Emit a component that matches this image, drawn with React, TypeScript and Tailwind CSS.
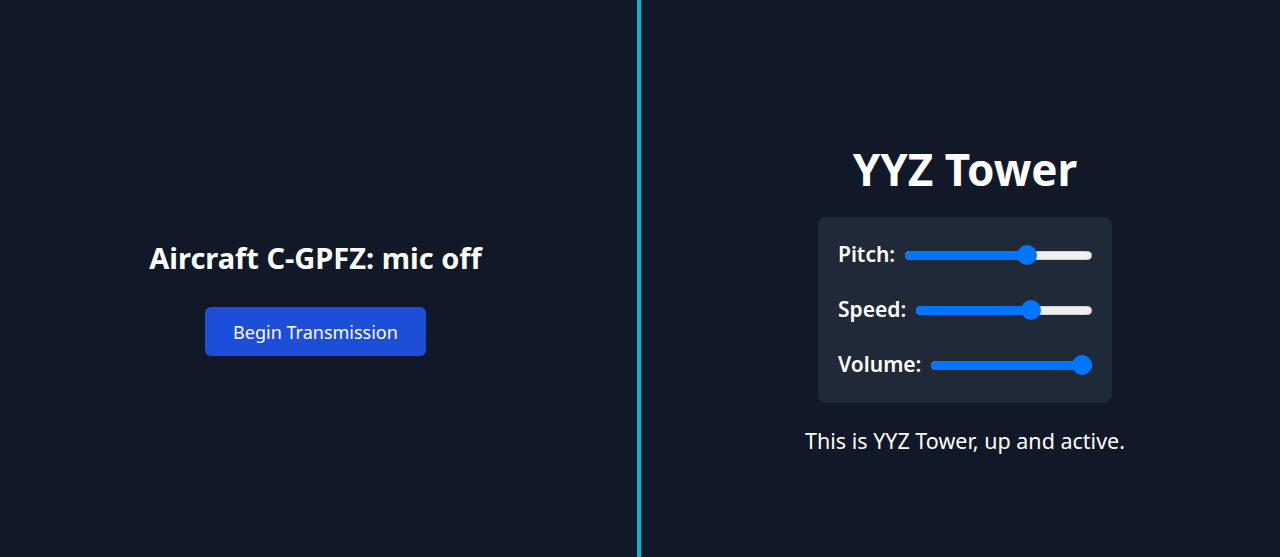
import React from 'react';

const font = { fontFamily: '"Noto Sans", "Open Sans", sans-serif' };

function Slider({ label, value }: { label: string; value: number }) {
  return (
    <div className="flex h-7 items-center gap-[10px]">
      <span className="text-[21px] font-semibold text-white">{label}</span>
      <div className="relative flex h-5 flex-1 items-center">
        <div className="h-[9px] w-full rounded-full border border-[#d0d0d0] bg-[#efefef]" />
        <div
          className="absolute left-0 h-[9px] rounded-full bg-[#0075ff]"
          style={{ width: `calc((100% - 20px) * ${value / 100} + 10px)` }}
        />
        <div
          className="absolute h-5 w-5 rounded-full bg-[#0075ff]"
          style={{ left: `calc((100% - 20px) * ${value / 100})` }}
        />
      </div>
    </div>
  );
}

export default function App() {
  return (
    <div className="flex h-[557px] w-full bg-[#111827] text-white" style={font}>
      <section className="flex w-[641px] flex-col items-center justify-center border-r-4 border-[#06b6d4] pr-[6px] pt-[39px]">
        <h2 className="text-[29px] leading-9 font-bold">Aircraft C-GPFZ: mic off</h2>
        <button className="mt-[31px] h-[49px] rounded-md bg-[#1d4ed8] px-7 text-lg text-white">
          Begin Transmission
        </button>
      </section>
      <section className="flex flex-1 flex-col items-center justify-center pl-[9px] pt-[43px]">
        <h1 className="text-[44px] leading-[48px] font-bold">YYZ Tower</h1>
        <div className="mt-6 flex w-[294px] flex-col gap-[27px] rounded-lg bg-[#1f2937] px-5 py-6">
          <Slider label="Pitch:" value={67} />
          <Slider label="Speed:" value={67} />
          <Slider label="Volume:" value={100} />
        </div>
        <p className="mt-6 text-[21.5px] leading-7">This is YYZ Tower, up and active.</p>
      </section>
    </div>
  );
}
